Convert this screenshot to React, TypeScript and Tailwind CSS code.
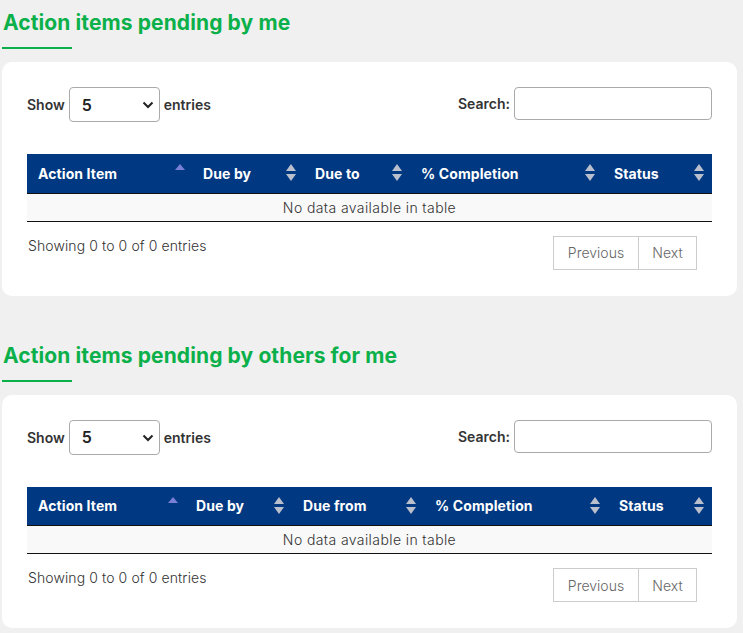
import React from "react";

type Col = { label: string; width: number; active?: boolean };

function SortIcon({ active }: { active?: boolean }) {
  if (active) {
    return (
      <svg width="10" height="16" viewBox="0 0 10 16" className="absolute right-[7px] top-[10px]">
        <path d="M5 0 L10 6 L0 6 Z" fill="#7a7fd6" />
      </svg>
    );
  }
  return (
    <svg width="10" height="18" viewBox="0 0 10 18" className="absolute right-[8px] top-[10px]">
      <path d="M5 0 L10 7 L0 7 Z" fill="#b9bfcc" />
      <path d="M0 10 L10 10 L5 17 Z" fill="#b9bfcc" />
    </svg>
  );
}

function Section({ title, cols }: { title: string; cols: Col[] }) {
  return (
    <section>
      <h2 className="px-[3px] pt-[10px] text-[21px] font-bold leading-[26px] tracking-[0.1px] text-[#0cb04a]">
        {title}
      </h2>
      <div className="ml-[2px] mt-[11px] h-[2px] w-[70px] bg-[#0cb04a]" />

      <div className="mx-[2px] mt-[13px] w-[735px] rounded-[10px] bg-white px-[25px] pb-[26px] pt-[25px]">
        {/* length + search */}
        <div className="flex items-start justify-between">
          <div className="flex items-center gap-[4px] text-[14px] font-semibold text-[#333]">
            <span>Show</span>
            <div className="relative flex h-[35px] w-[91px] items-center rounded-[4px] border border-[#aaa] pl-[12px] text-[16px] font-semibold text-[#222]">
              5
              <svg width="12" height="8" viewBox="0 0 12 8" className="absolute right-[5px] top-[13px]">
                <path d="M1.5 1.5 L6 6 L10.5 1.5" stroke="#222" strokeWidth="2" fill="none" />
              </svg>
            </div>
            <span>entries</span>
          </div>
          <div className="flex items-center gap-[4px] text-[14px] font-semibold text-[#333]">
            <span>Search:</span>
            <div className="h-[33px] w-[198px] rounded-[4px] border border-[#aaa]" />
          </div>
        </div>

        {/* table */}
        <table className="mt-[32px] w-[685px] table-fixed border-collapse">
          <thead>
            <tr className="h-[39px] bg-[#003882] text-left text-[14px] font-bold tracking-[0.1px] text-white">
              {cols.map((c) => (
                <th
                  key={c.label}
                  style={{ width: c.width }}
                  className="relative border-b border-[#111] pl-[11px] font-bold"
                >
                  {c.label}
                  <SortIcon active={c.active} />
                </th>
              ))}
            </tr>
          </thead>
          <tbody>
            <tr className="h-[28px] bg-[#f9f9f9]">
              <td colSpan={cols.length} className="border-b border-[#111] text-center text-[14px] font-light tracking-[0.4px] text-[#333]">
                No data available in table
              </td>
            </tr>
          </tbody>
        </table>

        {/* info + paging */}
        <div className="mt-[13px] flex items-start justify-between">
          <div className="pl-[1px] text-[14px] font-light tracking-[0.1px] text-[#333]">Showing 0 to 0 of 0 entries</div>
          <div className="mr-[15px] mt-[1px] flex text-[14px] font-light text-[#666]">
            <div className="flex h-[34px] w-[86px] items-center justify-center border border-[#ccc]">Previous</div>
            <div className="flex h-[34px] w-[58px] items-center justify-center border border-l-0 border-[#ccc]">Next</div>
          </div>
        </div>
      </div>
    </section>
  );
}

export default function App() {
  return (
    <div className="min-h-screen bg-[#f0f0f0] font-['Inter','Noto_Sans',sans-serif]">
      <Section
        title="Action items pending by me"
        cols={[
          { label: "Action Item", width: 165, active: true },
          { label: "Due by", width: 112 },
          { label: "Due to", width: 106 },
          { label: "% Completion", width: 193 },
          { label: "Status", width: 109 },
        ]}
      />
      <div className="h-[37px]" />
      <Section
        title="Action items pending by others for me"
        cols={[
          { label: "Action Item", width: 158, active: true },
          { label: "Due by", width: 107 },
          { label: "Due from", width: 132 },
          { label: "% Completion", width: 184 },
          { label: "Status", width: 104 },
        ]}
      />
    </div>
  );
}
